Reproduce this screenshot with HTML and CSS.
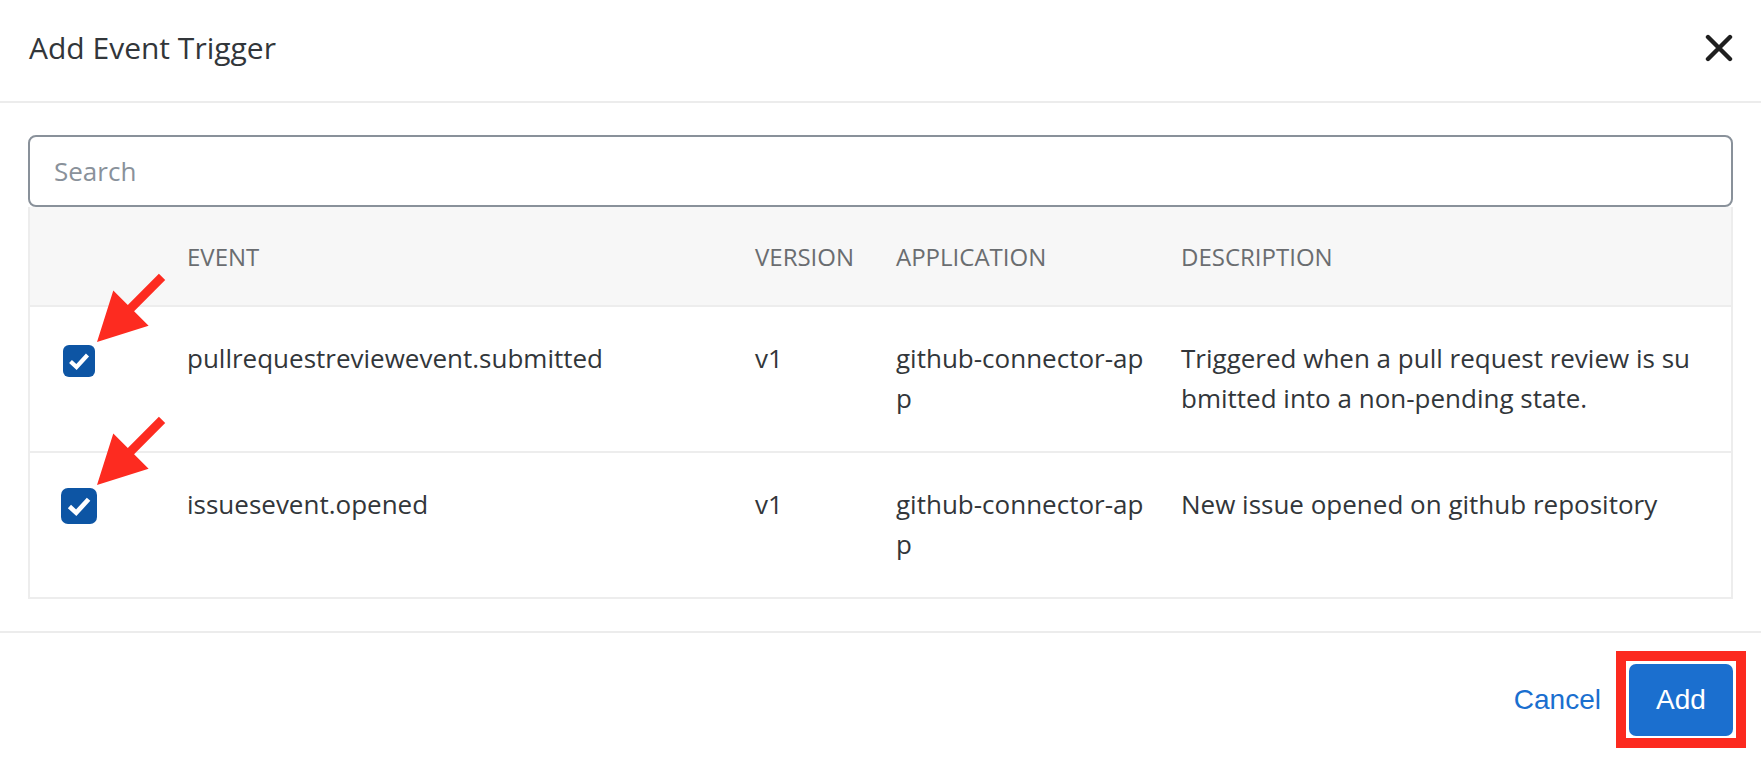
FILE: index.html
```html
<!DOCTYPE html>
<html lang="en">
<head>
<meta charset="utf-8">
<title>Add Event Trigger</title>
<link rel="stylesheet" href="styles.css">
</head>
<body>
<div class="dialog">
  <header class="dialog-header">
    <h1 class="dialog-title">Add Event Trigger</h1>
    <button class="close-btn" aria-label="Close">
      <svg width="28" height="28" viewBox="0 0 28 28"><path d="M3 3 L25 25 M25 3 L3 25" stroke="#1f1f1f" stroke-width="4.4" stroke-linecap="round" fill="none"/></svg>
    </button>
  </header>

  <main class="dialog-body">
    <input class="search" type="text" placeholder="Search">
    <table class="events">
      <colgroup>
        <col class="col-check">
        <col class="col-event">
        <col class="col-version">
        <col class="col-app">
        <col class="col-desc">
      </colgroup>
      <thead>
        <tr>
          <th></th>
          <th>Event</th>
          <th>Version</th>
          <th>Application</th>
          <th>Description</th>
        </tr>
      </thead>
      <tbody>
        <tr>
          <td class="cell-check">
            <span class="checkbox">
              <svg class="check" viewBox="0 0 32 32"><path d="M7.5 16.5 L13.5 22 L24.5 10" stroke="#fff" stroke-width="4.2" fill="none"/></svg>
              <svg class="annot-arrow" width="70" height="72" viewBox="0 0 70 72"><polygon points="1,70 17.3,18.4 31.8,32.9 62.9,1.8 69.2,8.1 38.1,39.2 52.6,53.7" fill="#fd2b20"/></svg>
            </span>
          </td>
          <td>pullrequestreviewevent.submitted</td>
          <td>v1</td>
          <td class="cell-app">github-connector-app</td>
          <td class="cell-desc">Triggered when a pull request review is submitted into a non-pending state.</td>
        </tr>
        <tr>
          <td class="cell-check">
            <span class="checkbox checkbox--lg">
              <svg class="check" viewBox="0 0 32 32"><path d="M7.5 16.5 L13.5 22 L24.5 10" stroke="#fff" stroke-width="4.2" fill="none"/></svg>
              <svg class="annot-arrow" width="70" height="72" viewBox="0 0 70 72"><polygon points="1,70 17.3,18.4 31.8,32.9 62.9,1.8 69.2,8.1 38.1,39.2 52.6,53.7" fill="#fd2b20"/></svg>
            </span>
          </td>
          <td>issuesevent.opened</td>
          <td>v1</td>
          <td class="cell-app">github-connector-app</td>
          <td class="cell-desc">New issue opened on github repository</td>
        </tr>
      </tbody>
    </table>
  </main>

  <footer class="dialog-footer">
    <button class="btn-link">Cancel</button>
    <span class="highlight">
      <button class="btn-primary">Add</button>
    </span>
  </footer>
</div>
</body>
</html>
```

FILE: styles.css
```css
html, body {
  margin: 0;
  background: #ffffff;
}

body {
  font-family: "Open Sans", "Noto Sans", sans-serif;
  color: #32363a;
}

.dialog {
  width: 100%;
}

.dialog-header {
  display: flex;
  align-items: center;
  justify-content: space-between;
  box-sizing: border-box;
  height: 103px;
  padding: 0 28px 6px 29px;
  border-bottom: 2px solid #ececec;
}

.dialog-title {
  margin: 0;
  font-size: 30px;
  font-weight: 400;
  line-height: 1.2;
  color: #32363a;
}

.close-btn {
  display: flex;
  border: 0;
  background: none;
  padding: 0;
  width: 28px;
  height: 28px;
  cursor: pointer;
}

.dialog-body {
  padding: 32px 28px 32px;
  border-bottom: 2px solid #ececec;
}

.search {
  display: block;
  width: 100%;
  box-sizing: border-box;
  height: 72px;
  margin: 0;
  padding: 0 24px;
  border: 2px solid #89919a;
  border-radius: 8px;
  font-family: "Open Sans", "Noto Sans", sans-serif;
  font-size: 26px;
  color: #32363a;
  outline: none;
}

.search::placeholder {
  color: #89919a;
}

.events {
  width: 100%;
  table-layout: fixed;
  border-collapse: separate;
  border-spacing: 0;
  border: 2px solid #ededed;
  border-top: 0;
}

.col-check { width: 141px; }
.col-event { width: 568px; }
.col-version { width: 141px; }
.col-app { width: 285px; }

.events th {
  box-sizing: border-box;
  height: 100px;
  padding: 0 16px;
  background: #f7f7f7;
  border-bottom: 2px solid #ededed;
  color: #6a6d70;
  font-size: 24px;
  font-weight: 400;
  text-align: left;
  text-transform: uppercase;
  vertical-align: middle;
}

.events td {
  padding: 31px 16px 33px;
  font-size: 26px;
  line-height: 40px;
  vertical-align: top;
  color: #32363a;
  word-break: break-all;
}

.events tbody tr:not(:last-child) td {
  border-bottom: 2px solid #ededed;
}

.events td.cell-check {
  padding-left: 33px;
  padding-right: 0;
}

.events td.cell-app {
  padding-right: 10px;
}

.events td.cell-desc {
  padding-right: 28px;
}

.checkbox {
  position: relative;
  display: block;
  width: 32px;
  height: 32px;
  margin-top: 7px;
  border-radius: 6px;
  background: #0d55a4;
}

.checkbox--lg {
  width: 36px;
  height: 36px;
  margin: 4px 0 0 -2px;
  border-radius: 7px;
}

.check {
  display: block;
  width: 100%;
  height: 100%;
}

.annot-arrow {
  position: absolute;
  left: calc(100% + 1px);
  top: -73px;
  overflow: visible;
}

.checkbox--lg .annot-arrow {
  left: calc(100% - 1px);
}

.dialog-footer {
  display: flex;
  justify-content: flex-end;
  align-items: center;
  gap: 28px;
  padding: 31px 28px 27px;
}

.btn-link {
  border: 0;
  background: none;
  padding: 0;
  font-family: "Liberation Sans", Arial, sans-serif;
  font-size: 28px;
  color: #1a6fcf;
  cursor: pointer;
}

.highlight {
  position: relative;
  display: flex;
}

.highlight::after {
  content: "";
  position: absolute;
  top: -13px;
  left: -13px;
  right: -13px;
  bottom: -12px;
  border: 10px solid #fc2a1f;
  pointer-events: none;
}

.btn-primary {
  width: 104px;
  height: 72px;
  border: 0;
  border-radius: 7px;
  background: #1b6fcf;
  color: #ffffff;
  font-family: "Liberation Sans", Arial, sans-serif;
  font-size: 28px;
  cursor: pointer;
}
```
